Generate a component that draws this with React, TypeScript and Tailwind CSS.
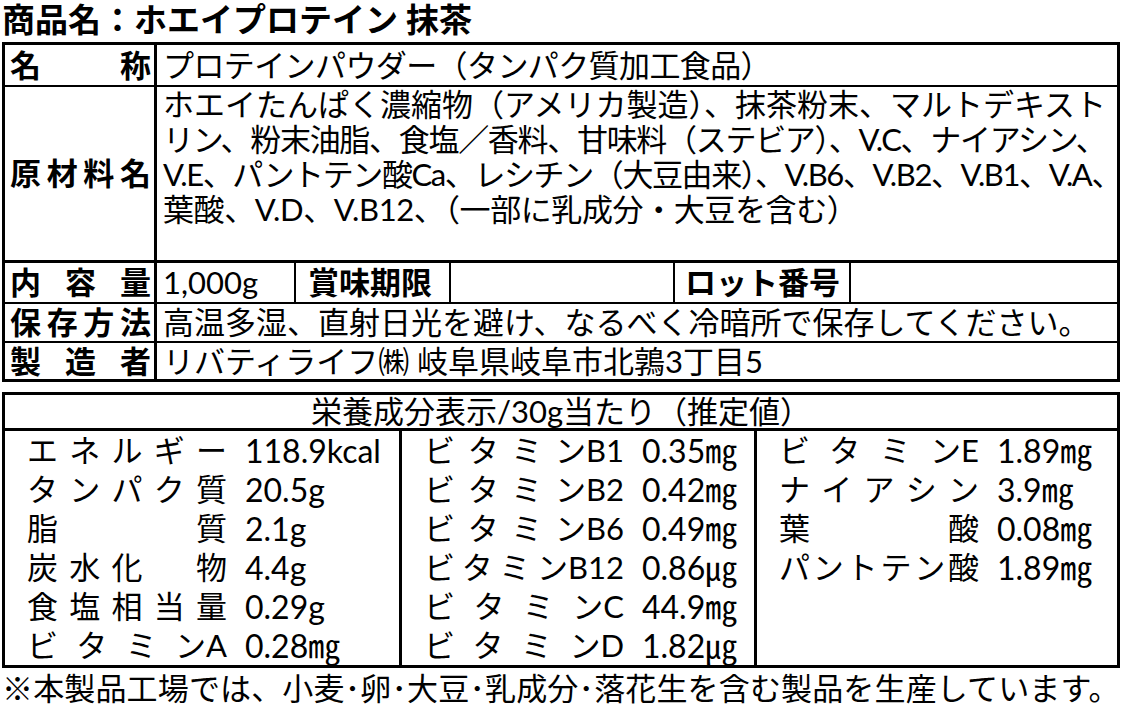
import React from "react";

type NRow = { label: string[]; value: string };

const col1: NRow[] = [
  { label: ["エ", "ネ", "ル", "ギ", "ー"], value: "118.9kcal" },
  { label: ["タ", "ン", "パ", "ク", "質"], value: "20.5g" },
  { label: ["脂", "質"], value: "2.1g" },
  { label: ["炭", "水", "化", "", "物"], value: "4.4g" },
  { label: ["食", "塩", "相", "当", "量"], value: "0.29g" },
  { label: ["ビ", "タ", "ミ", "ンA"], value: "0.28㎎" },
];
const col2: NRow[] = [
  { label: ["ビ", "タ", "ミ", "ンB1"], value: "0.35㎎" },
  { label: ["ビ", "タ", "ミ", "ンB2"], value: "0.42㎎" },
  { label: ["ビ", "タ", "ミ", "ンB6"], value: "0.49㎎" },
  { label: ["ビ", "タ", "ミ", "ンB12"], value: "0.86㎍" },
  { label: ["ビ", "タ", "ミ", "ンC"], value: "44.9㎎" },
  { label: ["ビ", "タ", "ミ", "ンD"], value: "1.82㎍" },
];
const col3: NRow[] = [
  { label: ["ビ", "タ", "ミ", "ンE"], value: "1.89㎎" },
  { label: ["ナ", "イ", "ア", "シ", "ン"], value: "3.9㎎" },
  { label: ["葉", "酸"], value: "0.08㎎" },
  { label: ["パ", "ン", "ト", "テ", "ン", "酸"], value: "1.89㎎" },
];

function NutCol({ rows }: { rows: NRow[] }) {
  return (
    <div className="flex flex-col">
      {rows.map((r, i) => (
        <div key={i} className="h-[39px] flex items-center pl-[22px] text-[31px] leading-none whitespace-nowrap">
          <div className="w-[200px] flex justify-between">
            {r.label.map((c, j) => (
              <span key={j} className={c === "" ? "inline-block w-[31px]" : ""}>
                {c}
              </span>
            ))}
          </div>
          <div className="ml-[18px] text-[32px]">{r.value}</div>
        </div>
      ))}
    </div>
  );
}

function Label({ chars }: { chars: string[] }) {
  return (
    <div className="w-[152px] shrink-0 border-r-[3px] border-black flex justify-between items-center pl-[5px] pr-[3px] text-[31px] font-bold leading-none">
      {chars.map((c, i) => (
        <span key={i}>{c}</span>
      ))}
    </div>
  );
}

export default function App() {
  return (
    <div className="w-[1122px] h-[709px] overflow-hidden bg-white text-black font-['Lato','Noto_Sans_CJK_JP',sans-serif]">
      <div className="h-[42px] pl-[2px] text-[33px] font-bold leading-[38px] whitespace-nowrap">
        商品名：ホエイプロテイン 抹茶
      </div>

      <div className="ml-[2px] w-[1118px] border-[3px] border-black">
        <div className="h-[42px] flex border-b-[2px] border-black">
          <Label chars={["名", "称"]} />
          <div className="flex-1 flex items-center pl-[6px] text-[31px] leading-none whitespace-nowrap tracking-[-0.6px]">
            プロテインパウダー（タンパク質加工食品）
          </div>
        </div>
        <div className="h-[176px] flex border-b-[3px] border-black">
          <Label chars={["原", "材", "料", "名"]} />
          <div className="flex-1 pl-[6px] text-[31px] leading-[35px] whitespace-nowrap">
            <div>ホエイたんぱく濃縮物（アメリカ製造）、抹茶粉末、マルトデキスト</div>
            <div className="tracking-[-1.3px]">リン、粉末油脂、食塩／香料、甘味料（ステビア）、V.C、ナイアシン、</div>
            <div className="tracking-[-1.4px]">V.E、パントテン酸Ca、レシチン（大豆由来）、V.B6、V.B2、V.B1、V.A、</div>
            <div className="tracking-[-0.4px]">葉酸、V.D、V.B12、（一部に乳成分・大豆を含む）</div>
          </div>
        </div>
        <div className="h-[41px] flex border-b-[2px] border-black">
          <Label chars={["内", "容", "量"]} />
          <div className="w-[139px] flex items-center pl-[6px] text-[31px] leading-none whitespace-nowrap border-r-[2px] border-black">
            1,000g
          </div>
          <div className="w-[155px] flex items-center pl-[12px] text-[31px] font-bold leading-none whitespace-nowrap border-r-[2px] border-black">
            賞味期限
          </div>
          <div className="w-[224px] border-r-[2px] border-black"></div>
          <div className="w-[176px] flex items-center pl-[10px] text-[31px] font-bold leading-none whitespace-nowrap border-r-[2px] border-black">
            ロット番号
          </div>
          <div className="flex-1"></div>
        </div>
        <div className="h-[39px] flex border-b-[2px] border-black">
          <Label chars={["保", "存", "方", "法"]} />
          <div className="flex-1 flex items-center pl-[6px] text-[31px] leading-none whitespace-nowrap">
            高温多湿、直射日光を避け、なるべく冷暗所で保存してください。
          </div>
        </div>
        <div className="h-[36px] flex">
          <Label chars={["製", "造", "者"]} />
          <div className="flex-1 flex items-center pl-[6px] text-[31px] leading-none whitespace-nowrap">
            リバティライフ㈱ 岐阜県岐阜市北鶉3丁目5
          </div>
        </div>
      </div>

      <div className="ml-[2px] mt-[10px] w-[1118px] border-[3px] border-black">
        <div className="h-[36px] border-b-[3px] border-black flex items-center justify-center text-[31px] leading-none whitespace-nowrap">
          栄養成分表示/30g当たり（推定値）
        </div>
        <div className="flex h-[234px]">
          <div className="w-[397px] border-r-[3px] border-black">
            <NutCol rows={col1} />
          </div>
          <div className="w-[355px] border-r-[3px] border-black">
            <NutCol rows={col2} />
          </div>
          <div className="flex-1">
            <NutCol rows={col3} />
          </div>
        </div>
      </div>

      <div className="h-[41px] pl-[2px] flex items-center text-[31px] leading-none whitespace-nowrap tracking-[0.15px]">
        ※本製品工場では、小麦･卵･大豆･乳成分･落花生を含む製品を生産しています。
      </div>
    </div>
  );
}
